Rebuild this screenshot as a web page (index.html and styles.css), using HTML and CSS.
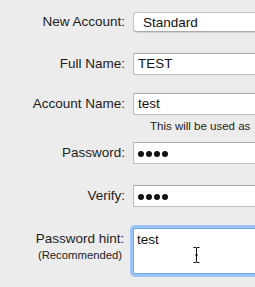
FILE: index.html
```html
<!DOCTYPE html>
<html lang="en">
<head>
    <meta charset="UTF-8">
    <title>New Account</title>
    <link rel="stylesheet" href="styles.css">
</head>
<body>
    <div class="form">
        <div class="row row-first">
            <label class="label">New Account:</label>
            <div class="popup">Standard</div>
        </div>
        <div class="row row-gap">
            <label class="label">Full Name:</label>
            <div class="field">TEST</div>
        </div>
        <div class="row row-tight">
            <label class="label">Account Name:</label>
            <div class="field">test</div>
        </div>
        <div class="note">This will be used as</div>
        <div class="row row-after-note">
            <label class="label">Password:</label>
            <div class="field dots"><span></span><span></span><span></span><span></span></div>
        </div>
        <div class="row row-gap">
            <label class="label">Verify:</label>
            <div class="field dots"><span></span><span></span><span></span><span></span></div>
        </div>
        <div class="row row-gap row-top">
            <label class="label label-hint">Password hint:<small>(Recommended)</small></label>
            <div class="hint-box">
                <div class="hint">test</div>
                <svg class="ibeam" width="7" height="16" viewBox="0 0 7 16">
                    <path d="M0.5 0.5h2.5l0.5 0.6 0.5-0.6h2.5M3.5 1v14M0.5 15.5h2.5l0.5-0.6 0.5 0.6h2.5M2 8h3" fill="none" stroke="#111" stroke-width="1"/>
                </svg>
            </div>
        </div>
    </div>
</body>
</html>
```

FILE: styles.css
```css
html, body { margin: 0; padding: 0; }
body { background-color: #ececec; font-family: "Liberation Sans", Arial, sans-serif; color: #1c1c1c; overflow: hidden; width: 255px; height: 287px; }
.form { padding-top: 12px; }
.row { display: flex; align-items: center; }
.row-top { align-items: flex-start; }
.row-gap { margin-top: 21px; }
.row-tight { margin-top: 18px; }
.row-after-note { margin-top: 9px; }
.label { flex: none; width: 125px; margin-right: 8px; text-align: right; font-size: 13.5px; line-height: 16px; white-space: nowrap; }
.label-hint { width: 90px; margin-left: 35px; text-align: center; margin-top: 3px; }
.label-hint small { display: block; font-size: 11.3px; line-height: 15px; margin-top: 1px; }
.popup { flex: none; width: 140px; height: 20px; box-sizing: border-box; padding: 0 9px; background: #fff; border: 1px solid #c3c3c3; border-bottom-color: #aaa; border-right: none; border-radius: 4px 0 0 4px; box-shadow: 0 1px 1px rgba(0,0,0,0.12); font-size: 13.5px; line-height: 19px; color: #111; }
.field { flex: none; width: 140px; height: 22px; box-sizing: border-box; padding: 0 4px; background: #fff; border: 1px solid #bdbdbd; border-top-color: #a9a9a9; border-right: none; font-size: 13.5px; line-height: 20px; color: #111; }
.dots { display: flex; align-items: center; gap: 2px; padding-top: 2px; }
.dots span { width: 6px; height: 6px; border-radius: 50%; background: #111; }
.note { margin: 4px 0 0 150px; font-size: 11.5px; line-height: 14px; white-space: nowrap; color: #1c1c1c; }
.hint-box { position: relative; flex: none; width: 140px; height: 46px; box-sizing: border-box; background: #fff; border: 1px solid #6ea6e6; border-right: none; border-radius: 2px 0 0 2px; box-shadow: 0 0 0 3px #9dc4f2; }
.hint { padding: 3px 3px; font-size: 13.5px; line-height: 16px; color: #111; }
.ibeam { position: absolute; left: 59px; top: 18px; }
```
